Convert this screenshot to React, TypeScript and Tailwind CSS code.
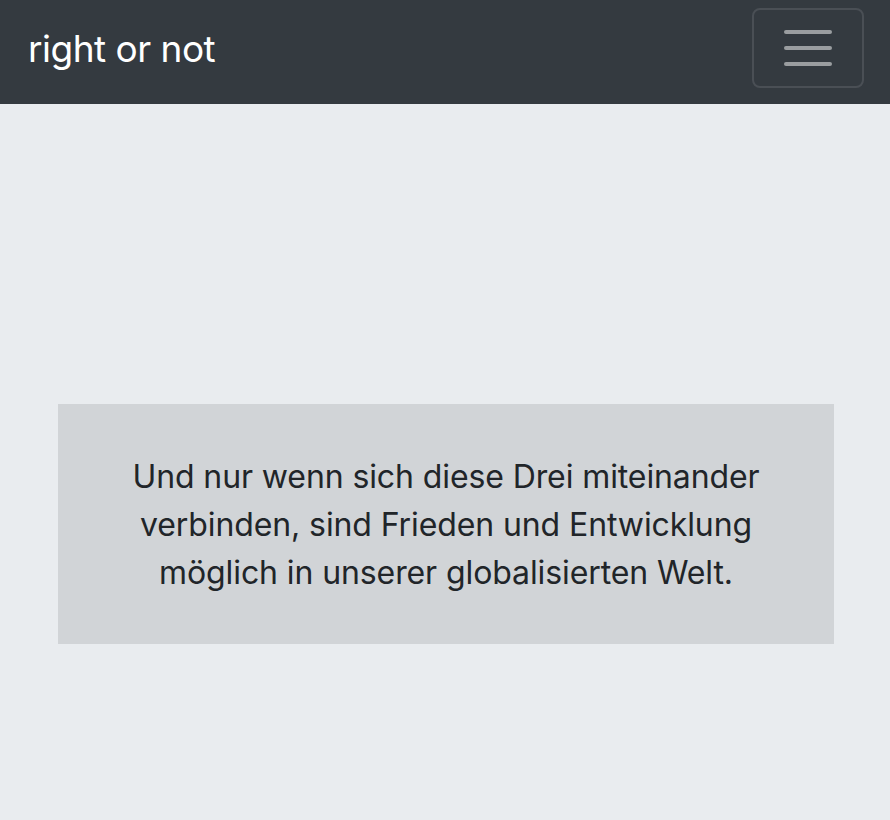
import React from "react";

export default function App() {
  return (
    <div className="min-h-[820px] bg-[#e9ecef] flex flex-col" style={{ fontFamily: "Inter, 'Noto Sans', sans-serif" }}>
      <nav className="h-[104px] bg-[#343a40] flex items-center justify-between pl-[28px] pr-[26px]">
        <a className="text-white text-[37px] leading-[60px] tracking-[-0.5px] pb-[7px]">right or not</a>
        <button className="self-start mt-[8px] w-[112px] h-[80px] border-2 border-[#4a4f55] rounded-[8px] flex flex-col items-center justify-center gap-[12px]">
          <span className="block w-[48px] h-[4px] rounded-full bg-[#9a9da0]"></span>
          <span className="block w-[48px] h-[4px] rounded-full bg-[#9a9da0]"></span>
          <span className="block w-[48px] h-[4px] rounded-full bg-[#9a9da0]"></span>
        </button>
      </nav>
      <main className="flex-1 pt-[300px] pl-[58px] pr-[56px]">
        <div className="bg-[#d1d4d7] pt-[49px] pb-[47px] px-[40px] text-center text-[#212529] text-[32px] leading-[48px] tracking-[-0.1px]">
          <p className="mx-auto max-w-[660px]">
            Und nur wenn sich diese Drei miteinander verbinden, sind Frieden und Entwicklung möglich in unserer globalisierten Welt.
          </p>
        </div>
      </main>
    </div>
  );
}
